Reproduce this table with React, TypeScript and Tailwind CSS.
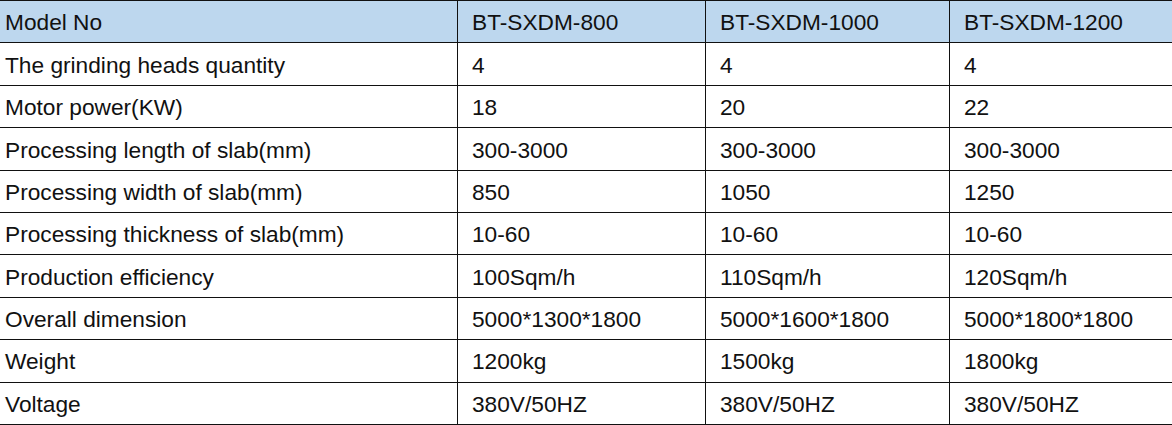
import React from 'react';

const header = ['Model No', 'BT-SXDM-800', 'BT-SXDM-1000', 'BT-SXDM-1200'];

const rows: string[][] = [
  ['The grinding heads quantity', '4', '4', '4'],
  ['Motor power(KW)', '18', '20', '22'],
  ['Processing length of slab(mm)', '300-3000', '300-3000', '300-3000'],
  ['Processing width of slab(mm)', '850', '1050', '1250'],
  ['Processing thickness of slab(mm)', '10-60', '10-60', '10-60'],
  ['Production efficiency', '100Sqm/h', '110Sqm/h', '120Sqm/h'],
  ['Overall dimension', '5000*1300*1800', '5000*1600*1800', '5000*1800*1800'],
  ['Weight', '1200kg', '1500kg', '1800kg'],
  ['Voltage', '380V/50HZ', '380V/50HZ', '380V/50HZ'],
];

function Row({ cells, head }: { cells: string[]; head?: boolean }) {
  return (
    <div
      className={`grid h-[42.4px] grid-cols-[457px_248px_244px_1fr] border-b border-[#111] ${
        head ? 'bg-[#bdd7ee]' : 'bg-white'
      }`}
    >
      {cells.map((c, i) => (
        <div
          key={i}
          className={`flex items-center pt-[2px] ${i === 0 ? 'pl-[5px]' : 'border-l border-[#111] pl-[14px]'}`}
        >
          {c}
        </div>
      ))}
    </div>
  );
}

export default function App() {
  return (
    <div
      className="w-[1172px] border-t border-[#111] bg-white text-[22.7px] leading-none text-[#111]"
      style={{ fontFamily: '"Liberation Sans", Arial, sans-serif' }}
    >
      <Row cells={header} head />
      {rows.map((r, i) => (
        <Row key={i} cells={r} />
      ))}
    </div>
  );
}
